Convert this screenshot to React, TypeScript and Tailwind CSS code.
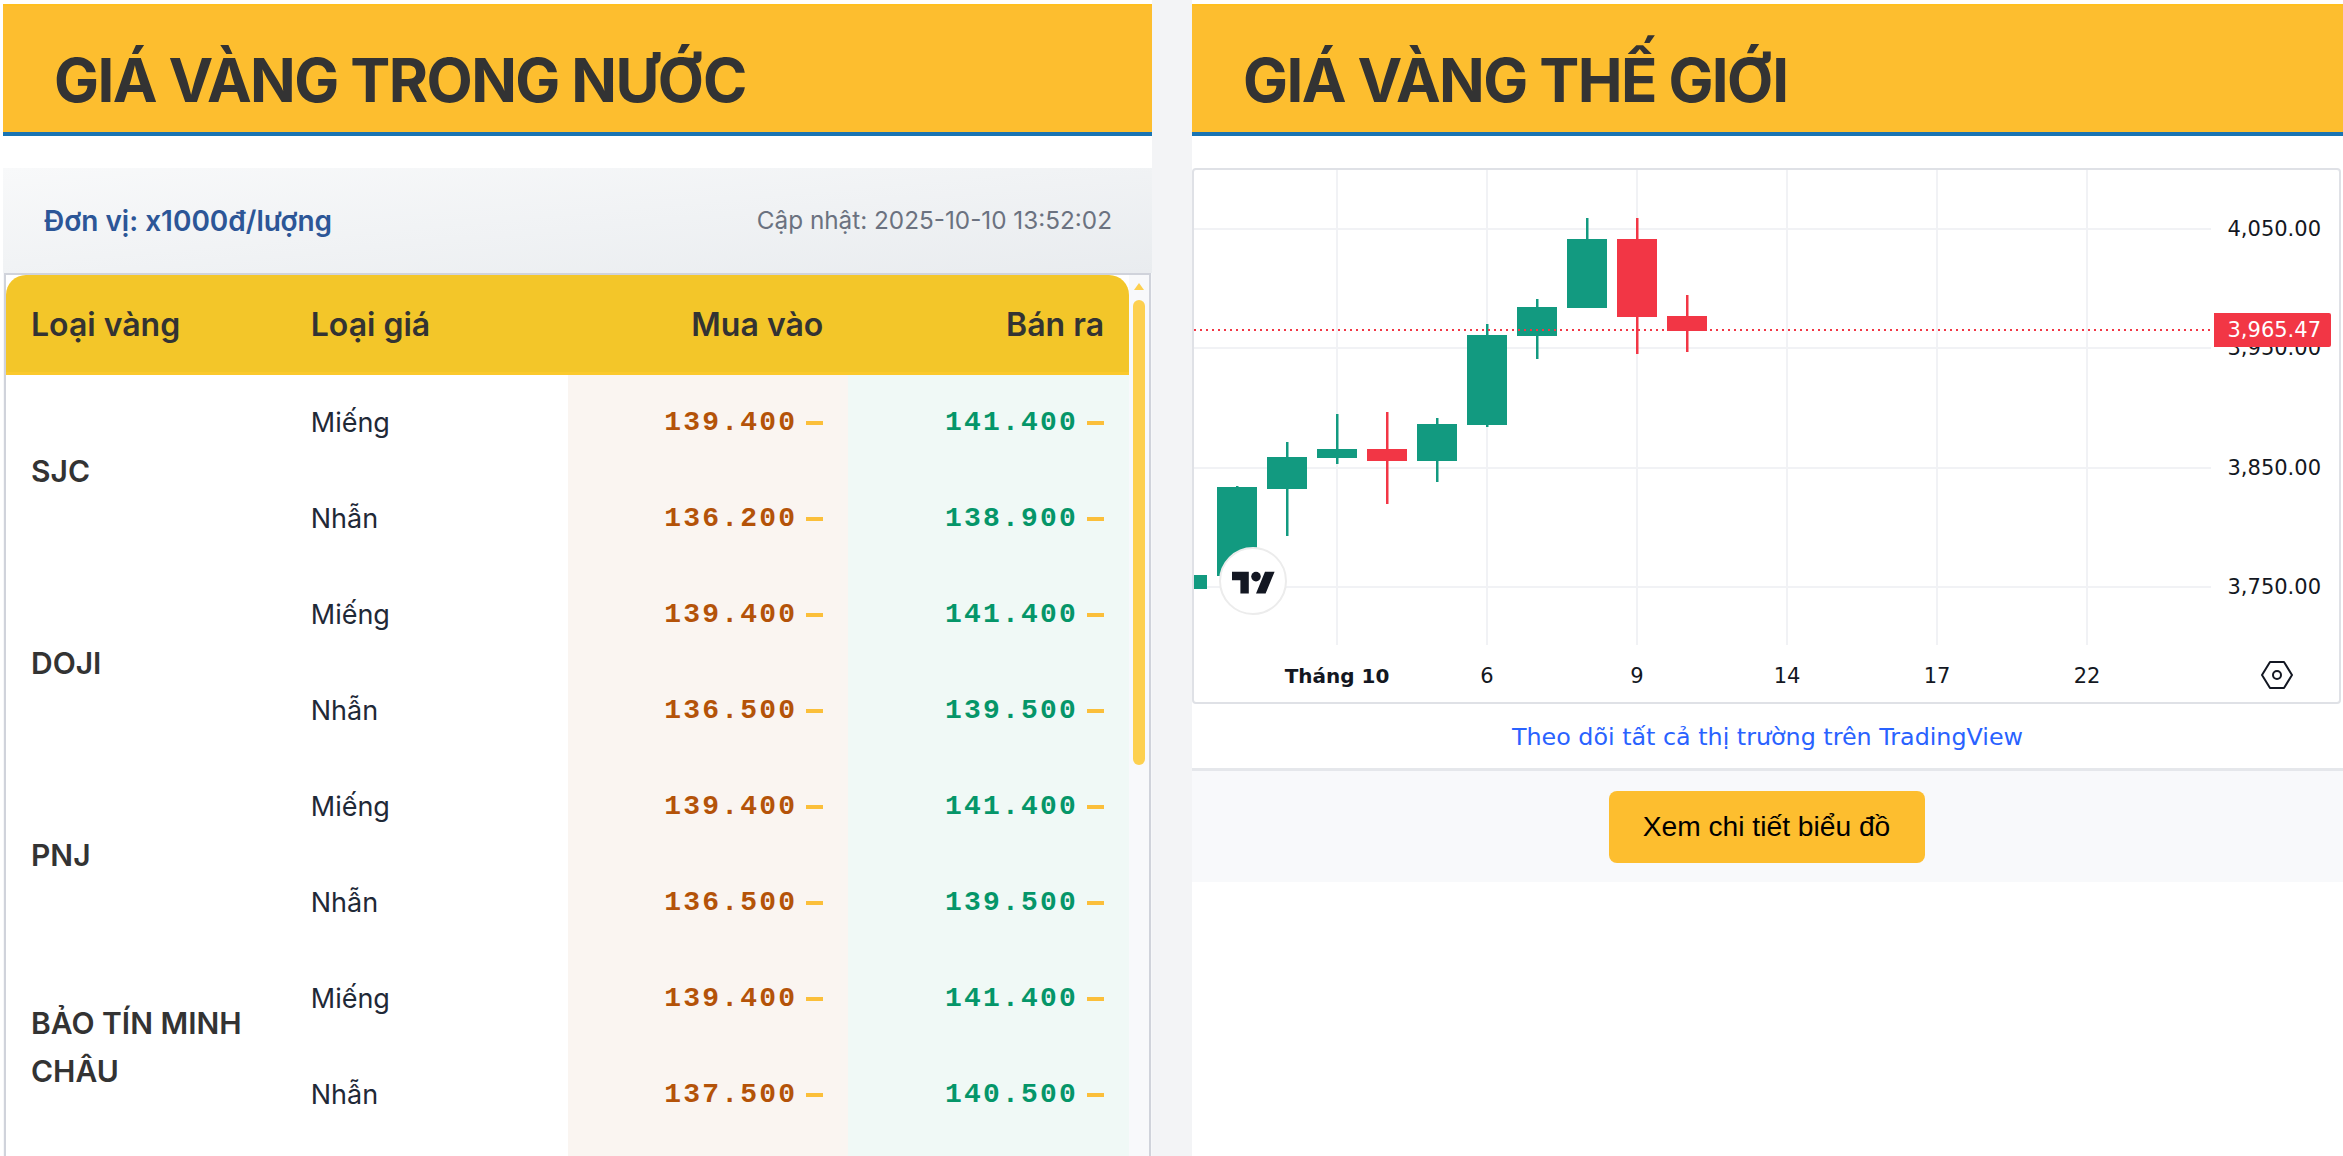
import React from 'react';

const sans = 'font-["Inter",sans-serif]';

const rows = [
    { name: 'SJC', items: [['Miếng', '139.400', '141.400'], ['Nhẫn', '136.200', '138.900']] },
    { name: 'DOJI', items: [['Miếng', '139.400', '141.400'], ['Nhẫn', '136.500', '139.500']] },
    { name: 'PNJ', items: [['Miếng', '139.400', '141.400'], ['Nhẫn', '136.500', '139.500']] },
    { name: 'BẢO TÍN MINH CHÂU', items: [['Miếng', '139.400', '141.400'], ['Nhẫn', '137.500', '140.500']] },
];

const GREEN = '#129a80';
const RED = '#f23645';

// x, bodyTop, bodyBottom, wickTop, wickBottom, color
const candles: [number, number, number, number, number, string][] = [
    [1237, 487, 576, 486, 576, GREEN],
    [1287, 457, 489, 442, 536, GREEN],
    [1337, 449, 458, 414, 464, GREEN],
    [1387, 449, 461, 412, 504, RED],
    [1437, 424, 461, 418, 482, GREEN],
    [1487, 335, 425, 324, 427, GREEN],
    [1537, 307, 336, 299, 359, GREEN],
    [1587, 239, 308, 218, 308, GREEN],
    [1637, 239, 317, 218, 354, RED],
    [1687, 316, 331, 295, 352, RED],
];

const Chart = () => (
    <svg viewBox="1194 170 1145 532" width={1145} height={532} className="block">
        <g stroke="#f1f2f5" strokeWidth="2">
            {[1337, 1487, 1637, 1787, 1937, 2087].map((x) => (
                <line key={x} x1={x} x2={x} y1={170} y2={645} />
            ))}
            {[229, 348, 468, 587].map((y) => (
                <line key={y} x1={1194} x2={2211} y1={y} y2={y} />
            ))}
        </g>
        <rect x={1194} y={575} width={13} height={14} fill={GREEN} />
        {candles.map(([x, t, b, wt, wb, c]) => (
            <g key={x} fill={c}>
                <rect x={x - 1} y={wt} width={2.5} height={wb - wt} />
                <rect x={x - 20} y={t} width={40} height={b - t} />
            </g>
        ))}
        <line x1={1194} x2={2211} y1={330} y2={330} stroke={RED} strokeWidth="2" strokeDasharray="2 4" />

        <circle cx={1253} cy={581} r={33} fill="#fff" stroke="#ececec" strokeWidth="2" />
        <g transform="translate(1232 567) scale(1.2)" fill="#131722">
            <path d="M14 22H7V11H0V4h14v18zM28 22h-8l7.5-18h8L28 22z" />
            <circle cx="20" cy="8" r="4" />
        </g>

        <g fontFamily="'DejaVu Sans', sans-serif" fontSize="21" fill="#131722">
            <g textAnchor="end">
                <text x={2321} y={236}>4,050.00</text>
                <text x={2321} y={355}>3,950.00</text>
                <text x={2321} y={475}>3,850.00</text>
                <text x={2321} y={594}>3,750.00</text>
            </g>
            <g textAnchor="middle">
                <text x={1337} y={683} fontWeight="700" fontSize="20">Tháng 10</text>
                <text x={1487} y={683}>6</text>
                <text x={1637} y={683}>9</text>
                <text x={1787} y={683}>14</text>
                <text x={1937} y={683}>17</text>
                <text x={2087} y={683}>22</text>
            </g>
        </g>

        <path d="M2214 313h115a2 2 0 0 1 2 2v30a2 2 0 0 1-2 2h-115z" fill={RED} />
        <text x={2321} y={337} textAnchor="end" fontFamily="'DejaVu Sans', sans-serif" fontSize="21" fill="#fff">3,965.47</text>

        <g fill="none" stroke="#131722" strokeWidth="2">
            <path d="M2270 662h14l8 13-8 13h-14l-8-13z" strokeLinejoin="round" />
            <circle cx={2277} cy={675} r={4} />
        </g>
    </svg>
);

const Price = ({ value, color }: { value: string; color: string }) => (
    <span className='inline-flex items-center gap-[9px] font-["Liberation_Mono",monospace] font-bold text-[28px] tracking-[2.2px]'>
        <span className={color}>{value}</span>
        <span className="block w-[17px] h-[4px] bg-[#fbbf3a]" />
    </span>
);

const Title = ({ children }: { children: React.ReactNode }) => (
    <div className="h-[132px] bg-[#fdbe2f] border-t-2 border-t-[#ffbf1f] border-b-4 border-b-[#1a74b3] flex items-center pl-[51px] pt-[22px]">
        <h2 className={`${sans} text-[60px] font-bold tracking-[-1.6px] text-[#333] leading-none`}>{children}</h2>
    </div>
);

export default function App() {
    return (
        <div className={`${sans} h-[1156px] overflow-hidden bg-white flex pt-[4px]`}>
            <section className="ml-[3px] w-[1149px] shrink-0 flex flex-col">
                <Title>GIÁ VÀNG TRONG NƯỚC</Title>
                <div className="mt-[32px] flex-1 min-h-0 flex flex-col bg-[#f6f7f9]">
                    <div className="h-[105px] flex items-center justify-between pl-[41px] pr-[40px] bg-gradient-to-br from-[#f8f9fa] to-[#e9ecef]">
                        <span className="text-[28px] font-semibold text-[#2c5697]">Đơn vị: x1000đ/lượng</span>
                        <span className="text-[24.3px] text-[#6b7280]">Cập nhật: 2025-10-10 13:52:02</span>
                    </div>
                    <div className="mx-[1px] flex-1 min-h-0 flex border-2 border-b-0 border-[#d0d3db] bg-white overflow-hidden">
                        <div className="w-[1123px] shrink-0">
                            <table className="w-full table-fixed border-collapse">
                                <thead>
                                    <tr className="h-[100px] text-[32px] font-semibold text-[#333]">
                                        <th className="px-[25px] text-left font-semibold bg-[#f3c629] rounded-tl-[20px] shadow-[inset_0_-3px_0_#fbc92d]">Loại vàng</th>
                                        <th className="px-[24px] text-left font-semibold bg-[#f3c629] shadow-[inset_0_-3px_0_#fbc92d]">Loại giá</th>
                                        <th className="px-[25px] text-right font-semibold bg-[#f3c629] shadow-[inset_0_-3px_0_#fbc92d]">Mua vào</th>
                                        <th className="px-[25px] text-right font-semibold bg-[#f3c629] rounded-tr-[20px] shadow-[inset_0_-3px_0_#fbc92d]">Bán ra</th>
                                    </tr>
                                </thead>
                                <tbody>
                                    {rows.map((r) =>
                                        r.items.map((it, i) => (
                                            <tr key={r.name + it[0]} className="h-[96px]">
                                                {i === 0 && (
                                                    <td rowSpan={2} className="px-[25px] text-[30px] leading-[48px] font-semibold text-[#333]">
                                                        {r.name}
                                                    </td>
                                                )}
                                                <td className="px-[24px] text-[27px] text-[#1f2937]">{it[0]}</td>
                                                <td className="px-[25px] text-right bg-[#faf5f1]">
                                                    <Price value={it[1]} color="text-[#b45309]" />
                                                </td>
                                                <td className="px-[25px] text-right bg-[#f0f9f6]">
                                                    <Price value={it[2]} color="text-[#059669]" />
                                                </td>
                                            </tr>
                                        )),
                                    )}
                                    <tr className="h-[20px]">
                                        <td />
                                        <td />
                                        <td className="bg-[#faf5f1]" />
                                        <td className="bg-[#f0f9f6]" />
                                    </tr>
                                </tbody>
                            </table>
                        </div>
                        <div className="flex-1 flex flex-col items-center bg-[#f8f9fb]">
                            <div className="mt-[8px] w-0 h-0 border-x-[5px] border-x-transparent border-b-[7px] border-b-[#fdd04f]" />
                            <div className="mt-[10px] w-[12px] h-[465px] rounded-full bg-[#fdd04f]" />
                        </div>
                    </div>
                </div>
            </section>

            <div className="w-[40px] shrink-0 -mt-[4px] bg-[#f3f4f6]" />

            <section className="flex-1 min-w-0 flex flex-col">
                <Title>GIÁ VÀNG THẾ GIỚI</Title>
                <div className="mt-[32px] mr-[2px] border-[2px] border-[#dfe1e6] rounded-[4px] bg-white">
                    <Chart />
                </div>
                <a className='h-[64px] pt-[3px] flex items-center justify-center font-["DejaVu_Sans",sans-serif] text-[23.8px] text-[#2962ff]'>
                    Theo dõi tất cả thị trường trên TradingView
                </a>
                <div className="border-t-[3px] border-[#e5e7eb] h-[114px] bg-[#f8f9fb] flex items-center justify-center pr-[2px]">
                    <button
                        type="button"
                        className='w-[316px] h-[72px] rounded-[8px] bg-[#fdbe2f] font-["Liberation_Sans",sans-serif] text-[28.2px] text-black'
                    >
                        Xem chi tiết biểu đồ
                    </button>
                </div>
            </section>
        </div>
    );
}
